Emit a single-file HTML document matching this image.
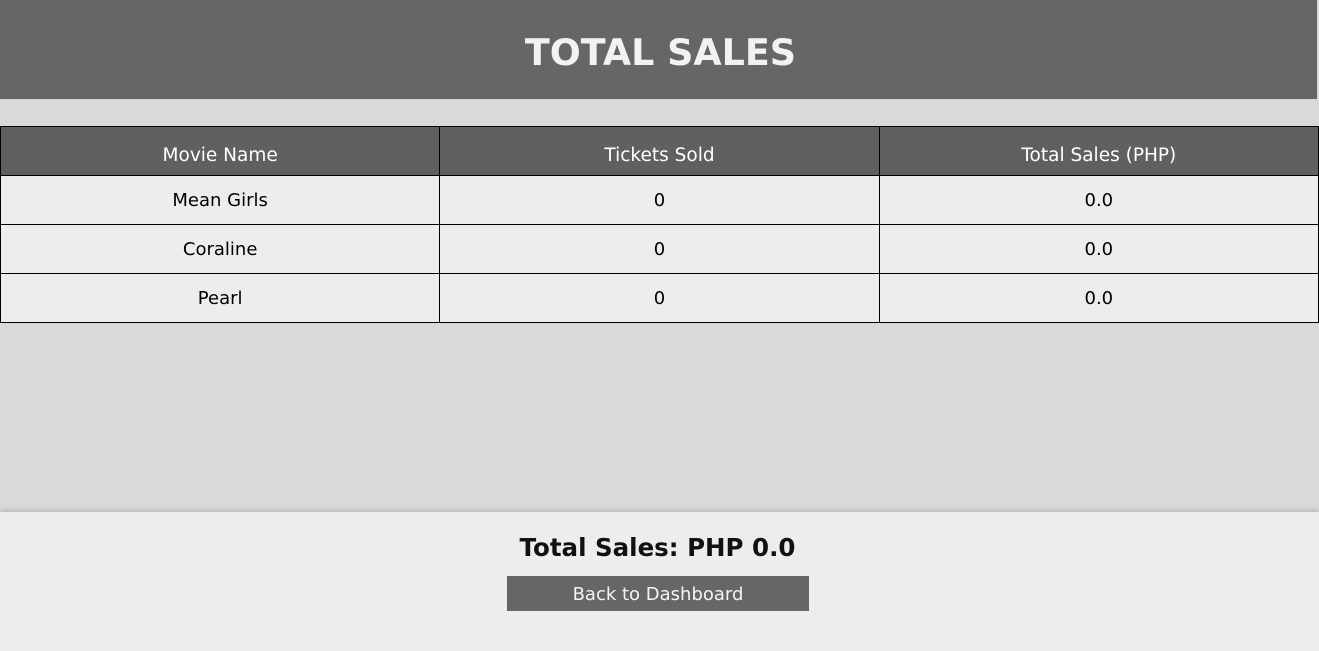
<!DOCTYPE html>
<html><head><style>
*{margin:0;padding:0;box-sizing:border-box}
body{width:1319px;height:651px;background:#d9d9d9;font-family:"DejaVu Sans","Liberation Sans",sans-serif;position:relative;overflow:hidden}
.hdr{position:absolute;left:0;top:0;width:1317px;height:99px;background:#666;color:#f2f2f2;text-align:center;font-weight:bold;font-size:36.5px;line-height:106px;padding-left:4px}
table{position:absolute;left:0;top:126px;width:1319px;border-collapse:collapse;table-layout:fixed}
td,th{border:1.5px solid #000;text-align:center;font-size:18px;height:49px;background:#ededed;color:#000;font-weight:normal}
th{background:#606060;color:#fff;padding-top:8px;font-size:18.5px}
.ft{position:absolute;left:0;top:512px;width:1319px;height:139px;background:#ededed;box-shadow:0 -2px 5px rgba(0,0,0,.15);text-align:center}
.ft h2{font-size:24.5px;font-weight:bold;color:#111;margin-top:21px;line-height:30px;padding-right:4px}
.btn{position:absolute;left:507px;top:64px;width:302px;height:35px;background:#666;color:#f5f5f5;font-size:18px;line-height:38px}
</style></head><body>
<div class="hdr">TOTAL SALES</div>
<table>
<tr><th>Movie Name</th><th>Tickets Sold</th><th>Total Sales (PHP)</th></tr>
<tr><td>Mean Girls</td><td>0</td><td>0.0</td></tr>
<tr><td>Coraline</td><td>0</td><td>0.0</td></tr>
<tr><td>Pearl</td><td>0</td><td>0.0</td></tr>
</table>
<div class="ft"><h2>Total Sales: PHP 0.0</h2><div class="btn">Back to Dashboard</div></div>
</body></html>
